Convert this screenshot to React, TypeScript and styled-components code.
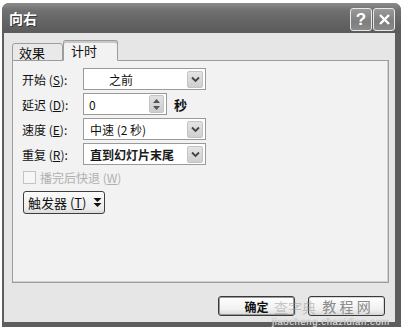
import styled, { createGlobalStyle } from "styled-components";

const GlobalStyle = createGlobalStyle`
  html, body {
    margin: 0;
    padding: 0;
    background: #ffffff;
  }
  body {
    font-family: "Noto Sans CJK SC", "Liberation Sans", sans-serif;
  }
`;

const FONT = `"Noto Sans CJK SC", "Liberation Sans", sans-serif`;

const Chevron = () => (
  <svg width="9" height="7" viewBox="0 0 9 7">
    <path d="M1 1.5 L4.5 5 L8 1.5" fill="none" stroke="#444" strokeWidth="1.8" />
  </svg>
);

const DoubleArrow = () => (
  <svg width="9" height="11" viewBox="0 0 9 11">
    <path d="M0.5 1 H8.5 L4.5 5 Z" fill="#111" />
    <path d="M0.5 6 H8.5 L4.5 10 Z" fill="#111" />
  </svg>
);

const App: React.FC = () => {
  return (
    <>
      <GlobalStyle />
      <Window>
        <TitleBar>
          <Title>向右</Title>
          <CaptionButtons>
            <CaptionButton>?</CaptionButton>
            <CaptionButton>
              <svg width="13" height="13" viewBox="0 0 13 13">
                <path d="M2 2 L11 11 M11 2 L2 11" stroke="#fff" strokeWidth="2.4" />
              </svg>
            </CaptionButton>
          </CaptionButtons>
        </TitleBar>
        <Body>
          <TabStrip>
            <Tab>效果</Tab>
            <Tab $active>计时</Tab>
          </TabStrip>
          <Panel>
            <FormGrid>
              <Label>开始 (<u>S</u>):</Label>
              <Select $width={123} $indent={25}>
                <span>之前</span>
                <ArrowBox><Chevron /></ArrowBox>
              </Select>

              <Label>延迟 (<u>D</u>):</Label>
              <InlineRow>
                <SpinInput>
                  <span>0</span>
                  <SpinBox>
                    <svg width="7" height="4" viewBox="0 0 7 4">
                      <path d="M0 4 L3.5 0 L7 4 Z" fill="#555" />
                    </svg>
                    <svg width="7" height="4" viewBox="0 0 7 4">
                      <path d="M0 0 L3.5 4 L7 0 Z" fill="#555" />
                    </svg>
                  </SpinBox>
                </SpinInput>
                <Unit>秒</Unit>
              </InlineRow>

              <Label>速度 (<u>E</u>):</Label>
              <Select $width={123} $indent={6}>
                <span>中速 (2 秒)</span>
                <ArrowBox><Chevron /></ArrowBox>
              </Select>

              <Label>重复 (<u>R</u>):</Label>
              <Select $width={123} $indent={6}>
                <strong>直到幻灯片末尾</strong>
                <ArrowBox><Chevron /></ArrowBox>
              </Select>
            </FormGrid>

            <CheckRow>
              <CheckBox />
              <span>播完后快退 (<u>W</u>)</span>
            </CheckRow>

            <TriggerButton>
              <span>触发器 (<u>T</u>)</span>
              <DoubleArrow />
            </TriggerButton>
          </Panel>
          <ButtonRow>
            <DialogButton $default>确定</DialogButton>
            <DialogButton>教 程 网</DialogButton>
          </ButtonRow>
        </Body>
        <WatermarkMark>查字典</WatermarkMark>
        <WatermarkUrl>jiaocheng.chazidian.com</WatermarkUrl>
      </Window>
    </>
  );
};

const Window = styled.div`
  position: relative;
  box-sizing: border-box;
  display: flex;
  flex-direction: column;
  width: 399px;
  height: 324px;
  margin: 3px 0 0 2px;

  background: #5e5e5e;
  border-radius: 7px 7px 0 0;
  overflow: hidden;
  padding: 0 6px 5px 2px;
`;

const TitleBar = styled.div`
  display: flex;
  align-items: center;
  justify-content: space-between;
  height: 30px;
  margin: 0 -6px 0 -2px;
  padding: 0 6px 0 7px;

  background: linear-gradient(180deg, #8c8c8c 0%, #707070 25%, #626262 70%, #5a5a5a 100%);
`;

const Title = styled.span`
  font-family: ${FONT};
  font-size: 14px;
  font-weight: bold;
  color: #ffffff;
  text-shadow: 1px 1px 0 #3c3c3c;
`;

const CaptionButtons = styled.div`
  display: flex;
  gap: 1px;
  margin-top: 3px;
`;

const CaptionButton = styled.div`
  box-sizing: border-box;
  display: flex;
  align-items: center;
  justify-content: center;
  width: 22px;
  height: 23px;

  font-family: "Liberation Sans", sans-serif;
  font-size: 17px;
  font-weight: bold;
  color: #ffffff;

  border: 1px solid #e8e8e8;
  border-radius: 3px;
  background: linear-gradient(180deg, #9a9a9a 0%, #7e7e7e 60%, #8a8a8a 100%);
`;

const Body = styled.div`
  flex: 1;
  display: flex;
  flex-direction: column;
  padding: 7px 6px 0 8px;

  background: #e6e6e6;
`;

const TabStrip = styled.div`
  display: flex;
  align-items: flex-end;
  height: 21px;
  margin-bottom: -1px;
  position: relative;
  z-index: 1;
`;

interface TabProps {
  $active?: boolean;
}

const Tab = styled.div<TabProps>`
  box-sizing: border-box;
  display: flex;
  align-items: center;
  width: ${({ $active }) => ($active ? "55px" : "51px")};
  height: ${({ $active }) => ($active ? "21px" : "18px")};
  padding-left: ${({ $active }) => ($active ? "7px" : "6px")};

  font-family: ${FONT};
  font-size: 13px;
  color: #111;

  background: ${({ $active }) => ($active ? "#f2f2f2" : "#e9e9e9")};
  border: 1px solid #9c9c9c;
  border-bottom: ${({ $active }) => ($active ? "1px solid #f2f2f2" : "1px solid #9c9c9c")};
  border-radius: 3px 3px 0 0;
  box-shadow: ${({ $active }) => ($active ? "inset 0 2px 0 #c8c8c8" : "none")};
`;

const Panel = styled.div`
  box-sizing: border-box;
  display: flex;
  flex-direction: column;
  align-items: flex-start;
  height: 223px;
  padding: 7px 0 0 9px;

  background: #f2f2f2;
  border: 1px solid #9c9c9c;
  box-shadow: inset -1px -1px 0 #d0d0d0;
`;

const FormGrid = styled.div`
  display: grid;
  grid-template-columns: 61px auto;
  grid-auto-rows: 22px;
  row-gap: 3px;
  align-items: center;
`;

const Label = styled.span`
  font-family: ${FONT};
  font-size: 12px;
  color: #111;
  white-space: nowrap;
`;

interface SelectProps {
  $width: number;
  $indent: number;
}

const Select = styled.div<SelectProps>`
  box-sizing: border-box;
  display: flex;
  align-items: center;
  justify-content: space-between;
  width: ${({ $width }) => $width}px;
  height: 22px;
  padding: 0 2px 0 ${({ $indent }) => $indent}px;

  font-family: ${FONT};
  font-size: 12px;
  color: #111;

  background: #ffffff;
  border: 1px solid #9a9a9a;

  strong {
    font-weight: bold;
    color: #1a1a1a;
  }
`;

const ArrowBox = styled.div`
  box-sizing: border-box;
  display: flex;
  align-items: center;
  justify-content: center;
  width: 16px;
  height: 17px;

  background: linear-gradient(180deg, #e4e4e4 0%, #cfcfcf 100%);
  border: 1px solid #c4c4c4;
  border-radius: 2px;
`;

const InlineRow = styled.div`
  display: flex;
  align-items: center;
  gap: 7px;
`;

const SpinInput = styled.div`
  box-sizing: border-box;
  display: flex;
  align-items: center;
  justify-content: space-between;
  width: 84px;
  height: 22px;
  padding: 0 2px 0 5px;

  font-family: ${FONT};
  font-size: 12px;
  color: #111;

  background: #ffffff;
  border: 1px solid #9a9a9a;
`;

const SpinBox = styled.div`
  box-sizing: border-box;
  display: flex;
  flex-direction: column;
  align-items: center;
  justify-content: center;
  gap: 3px;
  width: 15px;
  height: 18px;

  background: linear-gradient(180deg, #e2e2e2 0%, #cdcdcd 100%);
  border: 1px solid #c4c4c4;
  border-radius: 2px;
`;

const Unit = styled.span`
  font-family: ${FONT};
  font-size: 13px;
  font-weight: bold;
  color: #111;
`;

const CheckRow = styled.div`
  display: flex;
  align-items: center;
  gap: 4px;
  margin: 4px 0 0 1px;

  font-family: ${FONT};
  font-size: 12px;
  color: #b0b0b0;
`;

const CheckBox = styled.div`
  box-sizing: border-box;
  width: 13px;
  height: 13px;

  background: #f6f6f6;
  border: 1px solid #c4c4c4;
`;

const TriggerButton = styled.div`
  box-sizing: border-box;
  display: flex;
  align-items: center;
  gap: 6px;
  width: 82px;
  height: 23px;
  margin: 5px 0 0 1px;
  padding-left: 4px;

  font-family: ${FONT};
  font-size: 13px;
  color: #111;

  background: linear-gradient(180deg, #fbfbfb 0%, #ececec 80%, #dadada 100%);
  border: 1px solid #3e3e3e;
  border-radius: 3px;
`;

const ButtonRow = styled.div`
  display: flex;
  justify-content: flex-end;
  gap: 13px;
  padding: 13px 4px 0 0;
`;

interface DialogButtonProps {
  $default?: boolean;
}

const DialogButton = styled.div<DialogButtonProps>`
  box-sizing: border-box;
  display: flex;
  align-items: center;
  justify-content: center;
  width: 77px;
  height: 20px;

  font-family: ${FONT};
  font-size: ${({ $default }) => ($default ? "12px" : "14px")};
  font-weight: ${({ $default }) => ($default ? "bold" : "normal")};
  color: ${({ $default }) => ($default ? "#111" : "#8a8a8a")};
  white-space: pre;

  background: linear-gradient(180deg, #ffffff 0%, #f0f0f0 70%, #d8d8d8 100%);
  border: 1px solid #3a3a3a;
  border-radius: 3px;
  box-shadow: ${({ $default }) => ($default ? "inset 0 0 0 1px #9a9a9a" : "inset 0 0 0 1px #d6d6d6")};
`;

const WatermarkMark = styled.div`
  position: absolute;
  left: 272px;
  top: 296px;
  pointer-events: none;

  font-family: ${FONT};
  font-size: 14px;
  line-height: 16px;
  color: rgba(150, 150, 150, 0.5);
`;

const WatermarkUrl = styled.div`
  position: absolute;
  left: 270px;
  top: 314px;
  pointer-events: none;

  font-family: "Liberation Sans", sans-serif;
  font-size: 9.5px;
  line-height: 10px;
  letter-spacing: 0.6px;
  color: #e6e6e6;
  text-shadow: 0 0 1px #707070;
`;

export default App;
